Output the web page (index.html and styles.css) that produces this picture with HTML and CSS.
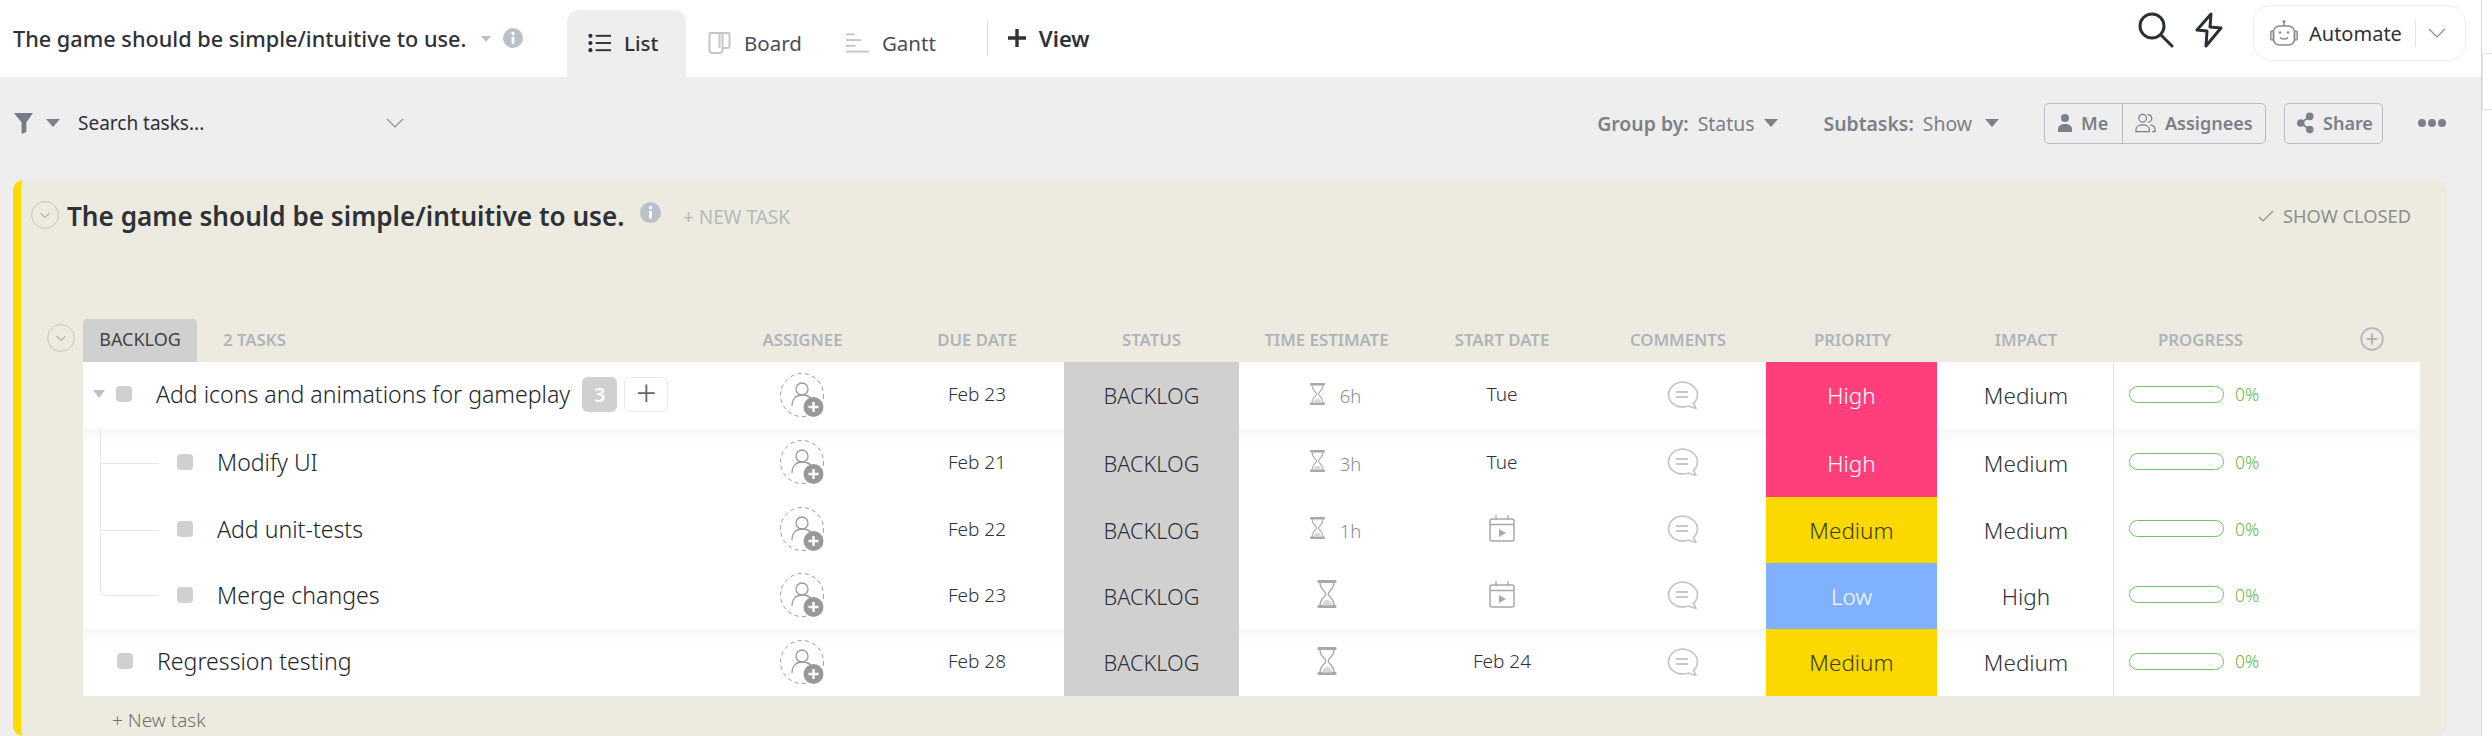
FILE: index.html
```html
<!DOCTYPE html>
<html lang="en">
<head>
  <meta charset="UTF-8" />
  <title>The game should be simple/intuitive to use.</title>
  <link rel="stylesheet" href="styles.css">
</head>
<body>
  <svg class="sprites" width="0" height="0">
    <symbol id="i-info" viewBox="0 0 20 20"><circle cx="10" cy="10" r="10" fill="#b9c0c9"/><rect x="8.6" y="8.5" width="2.8" height="7.5" rx="1" fill="#fff"/><circle cx="10" cy="5.5" r="1.7" fill="#fff"/></symbol>
    <symbol id="i-chev" viewBox="0 0 18 10"><path d="M1 1l8 8 8-8" fill="none" stroke="#8b8f96" stroke-width="1.2"/></symbol>
    <symbol id="i-fold" viewBox="0 0 28 28"><circle cx="14" cy="14" r="13.4" fill="none" stroke="#c6c5ba" stroke-width="1"/><path d="M9.5 12l4.5 4.5 4.5-4.5" fill="none" stroke="#b5b5ad" stroke-width="1.2"/></symbol>
    <symbol id="i-user" viewBox="0 0 46 46">
      <circle cx="22" cy="22" r="21.5" fill="none" stroke="#999" stroke-width="1" stroke-dasharray="4 3.4"/>
      <circle cx="22" cy="16" r="6" fill="none" stroke="#999" stroke-width="1.3"/>
      <path d="M12 33c0-7 4-11 10-11s9 2 10 6" fill="none" stroke="#999" stroke-width="1.3"/>
      <circle cx="33.5" cy="34" r="10" fill="#999"/>
      <path d="M33.5 29v10M28.5 34h10" stroke="#fff" stroke-width="2.4"/>
    </symbol>
    <symbol id="i-glass" viewBox="0 0 15 22">
      <rect x="0" y="0" width="15" height="2.4" rx="1" fill="#a8a8a8"/><rect x="0" y="19.6" width="15" height="2.4" rx="1" fill="#a8a8a8"/>
      <path d="M2 2c0 6 4.5 6.5 4.5 9S2 14 2 20M13 2c0 6-4.5 6.5-4.5 9S13 14 13 20" fill="none" stroke="#a8a8a8" stroke-width="1.1"/>
      <path d="M3.5 20c.5-3 2.5-4 4-4.5 1.5.5 3.5 1.5 4 4.5z" fill="#d6d6d6"/>
    </symbol>
    <symbol id="i-cal" viewBox="0 0 26 27">
      <rect x="1" y="4" width="24" height="22" rx="2" fill="none" stroke="#a8a8a8" stroke-width="1.5"/>
      <path d="M1 9.5h24M7 0v5M19 0v5" stroke="#a8a8a8" stroke-width="1.3"/>
      <path d="M10 14l7 4-7 4z" fill="#a8a8a8"/>
    </symbol>
    <symbol id="i-comment" viewBox="0 0 32 28">
      <path d="M15.5 1.2C8 1.2 1.5 6.8 1.5 13.8S8 26 15.5 26c2.5 0 4.5-.5 6-1l7.5 2.5-2.5-5c2.5-2.3 4-5.3 4-8.7C30.5 6.8 23 1.2 15.5 1.2z" fill="none" stroke="#c4c8cd" stroke-width="1.8" stroke-linejoin="round"/>
      <path d="M9 11h12M9 16h12" stroke="#c4c8cd" stroke-width="1.8"/>
    </symbol>
  </svg>

  <div class="page">
    <div class="main">
      <header class="topbar">
        <div class="page-title">The game should be simple/intuitive to use.</div>
        <span class="caret caret-title"></span>
        <svg class="info-top"><use href="#i-info"/></svg>

        <nav class="tabs">
          <a class="tab tab-active">
            <svg class="tab-icon" viewBox="0 0 24 20"><g fill="#2e3138"><circle cx="2.5" cy="2.5" r="2.2"/><circle cx="2.5" cy="10" r="2.2"/><circle cx="2.5" cy="17.5" r="2.2"/><rect x="8" y="1.5" width="16" height="2"/><rect x="8" y="9" width="16" height="2"/><rect x="8" y="16.5" width="16" height="2"/></g></svg>
            List
          </a>
          <a class="tab">
            <svg class="tab-icon" viewBox="0 0 22 22"><path d="M2 1h18a1 1 0 0 1 1 1v12a2 2 0 0 1-2 2h-5V2M14 16v2a3 3 0 0 1-3 3H4a3 3 0 0 1-3-3V2a1 1 0 0 1 1-1h9v15" fill="none" stroke="#c3c6cb" stroke-width="2"/></svg>
            Board
          </a>
          <a class="tab">
            <svg class="tab-icon" viewBox="0 0 24 20"><g fill="#c3c6cb"><rect x="0" y="0" width="9" height="2"/><rect x="0" y="6" width="16" height="2"/><rect x="0" y="12" width="10" height="2"/><rect x="0" y="18" width="24" height="2"/></g></svg>
            Gantt
          </a>
        </nav>
        <span class="tab-sep"></span>
        <a class="add-view">
          <svg viewBox="0 0 18 18" width="18" height="18"><path d="M9 0v18M0 9h18" stroke="#2e3138" stroke-width="3.4"/></svg>
          View
        </a>

        <div class="top-right">
          <svg class="top-search" viewBox="0 0 36 36"><circle cx="14" cy="14" r="12" fill="none" stroke="#2b2f36" stroke-width="3"/><path d="M23 23l11 11" stroke="#2b2f36" stroke-width="3" stroke-linecap="round"/></svg>
          <svg class="top-bolt" viewBox="0 0 28 36"><path d="M16 2L2 18l10 1-1 15L26 16l-11-1z" fill="none" stroke="#2b2f36" stroke-width="3" stroke-linejoin="round"/></svg>
          <div class="automate">
            <svg class="robot" viewBox="0 0 28 26"><g fill="none" stroke="#8a8a8a" stroke-width="1.5"><rect x="3.5" y="6" width="21" height="19" rx="6"/><rect x=".8" y="11" width="2.7" height="9" rx="1.3"/><rect x="24.5" y="11" width="2.7" height="9" rx="1.3"/><path d="M14 6V2M10 17.5c1.5 2 6.5 2 8 0"/></g><circle cx="14" cy="1.5" r="1.5" fill="#8a8a8a"/><circle cx="10" cy="12.5" r="1.3" fill="#8a8a8a"/><circle cx="18" cy="12.5" r="1.3" fill="#8a8a8a"/></svg>
            <span class="automate-text">Automate</span>
            <span class="automate-sep"></span>
            <svg class="chev"><use href="#i-chev"/></svg>
          </div>
        </div>
      </header>

      <div class="toolbar">
        <svg class="filter" viewBox="0 0 20 22"><path d="M0 0h20l-7 10v10l-5 2V10z" fill="#777b85"/></svg>
        <span class="caret caret-filter"></span>
        <span class="search">Search tasks...</span>
        <svg class="chev chev-search"><use href="#i-chev"/></svg>

        <div class="tools">
          <span class="opt"><b>Group by:</b> Status</span><span class="caret caret-opt"></span>
          <span class="opt opt-sub"><b>Subtasks:</b> Show</span><span class="caret caret-opt caret-show"></span>
          <div class="btn-group">
            <a class="btn btn-me">
              <svg viewBox="0 0 14 18" width="14" height="18"><circle cx="7" cy="4" r="4" fill="#7b8089"/><path d="M0 18v-3c0-3 3-5 7-5s7 2 7 5v3z" fill="#7b8089"/></svg>
              Me
            </a>
            <a class="btn btn-assign">
              <svg viewBox="0 0 22 20" width="21" height="20"><g fill="none" stroke="#7b8089" stroke-width="1.3"><circle cx="8" cy="5" r="4"/><path d="M1 19v-2c0-3 3-5 7-5s7 2 7 5v2zM13 1.2c3 0 4.5 2 4.5 4s-1.5 4-4 4M16 12c3 .5 5 2.5 5 5v2h-3"/></g></svg>
              Assignees
            </a>
          </div>
          <a class="btn btn-share">
            <svg viewBox="0 0 18 22" width="17" height="22"><g fill="#7b8089"><circle cx="13.5" cy="4" r="4"/><circle cx="4" cy="11" r="4"/><circle cx="13.5" cy="18" r="4"/></g><path d="M13.5 4L4 11l9.5 7" fill="none" stroke="#7b8089" stroke-width="1.8"/></svg>
            Share
          </a>
          <span class="dots"><i></i><i></i><i></i></span>
        </div>
      </div>

      <section class="card">
        <div class="card-head">
          <svg class="fold"><use href="#i-fold"/></svg>
          <h2 class="card-title">The game should be simple/intuitive to use.</h2>
          <svg class="info-card"><use href="#i-info"/></svg>
          <span class="new-task-top">+ NEW TASK</span>
          <span class="show-closed">
            <svg viewBox="0 0 16 12" width="16" height="12"><path d="M1 7l4 4L15 1" fill="none" stroke="#8d8f8e" stroke-width="1.2"/></svg>
            SHOW CLOSED
          </span>
        </div>

        <div class="col-head">
          <div class="col-name">
            <svg class="fold fold-small"><use href="#i-fold"/></svg>
            <span class="status-tab">BACKLOG</span>
            <span class="task-count">2 TASKS</span>
          </div>
          <div>ASSIGNEE</div>
          <div>DUE DATE</div>
          <div>STATUS</div>
          <div>TIME ESTIMATE</div>
          <div>START DATE</div>
          <div>COMMENTS</div>
          <div>PRIORITY</div>
          <div>IMPACT</div>
          <div>PROGRESS</div>
          <div class="col-add"><svg viewBox="0 0 24 24" width="24" height="24"><circle cx="12" cy="12" r="10.8" fill="none" stroke="#b3b8bf" stroke-width="1.8"/><path d="M12 6.5v11M6.5 12h11" stroke="#a4a9b0" stroke-width="1.6"/></svg></div>
        </div>

        <div class="rows">
          <div class="row row-1">
            <div class="cell-name">
              <span class="caret caret-row"></span><span class="check"></span>
              <span class="task-name">Add icons and animations for gameplay</span>
              <span class="sub-count">3</span><span class="sub-add">+</span>
            </div>
            <div class="cell"><svg class="assignee"><use href="#i-user"/></svg></div>
            <div class="cell date">Feb 23</div>
            <div class="cell status">BACKLOG</div>
            <div class="cell time"><svg class="glass"><use href="#i-glass"/></svg><span>6h</span></div>
            <div class="cell date">Tue</div>
            <div class="cell"><svg class="comment"><use href="#i-comment"/></svg></div>
            <div class="cell prio high">High</div>
            <div class="cell impact">Medium</div>
            <div class="cell progress"><span class="bar"></span><span class="pct">0%</span></div>
          </div>

          <div class="row row-2 row-sub">
            <div class="cell-name"><span class="branch"></span><span class="check"></span><span class="task-name">Modify UI</span></div>
            <div class="cell"><svg class="assignee"><use href="#i-user"/></svg></div>
            <div class="cell date">Feb 21</div>
            <div class="cell status">BACKLOG</div>
            <div class="cell time"><svg class="glass"><use href="#i-glass"/></svg><span>3h</span></div>
            <div class="cell date">Tue</div>
            <div class="cell"><svg class="comment"><use href="#i-comment"/></svg></div>
            <div class="cell prio high">High</div>
            <div class="cell impact">Medium</div>
            <div class="cell progress"><span class="bar"></span><span class="pct">0%</span></div>
          </div>

          <div class="row row-3 row-sub">
            <div class="cell-name"><span class="branch"></span><span class="check"></span><span class="task-name">Add unit-tests</span></div>
            <div class="cell"><svg class="assignee"><use href="#i-user"/></svg></div>
            <div class="cell date">Feb 22</div>
            <div class="cell status">BACKLOG</div>
            <div class="cell time"><svg class="glass"><use href="#i-glass"/></svg><span>1h</span></div>
            <div class="cell"><svg class="cal"><use href="#i-cal"/></svg></div>
            <div class="cell"><svg class="comment"><use href="#i-comment"/></svg></div>
            <div class="cell prio medium">Medium</div>
            <div class="cell impact">Medium</div>
            <div class="cell progress"><span class="bar"></span><span class="pct">0%</span></div>
          </div>

          <div class="row row-4 row-sub">
            <div class="cell-name"><span class="branch branch-last"></span><span class="check"></span><span class="task-name">Merge changes</span></div>
            <div class="cell"><svg class="assignee"><use href="#i-user"/></svg></div>
            <div class="cell date">Feb 23</div>
            <div class="cell status">BACKLOG</div>
            <div class="cell"><svg class="glass glass-big"><use href="#i-glass"/></svg></div>
            <div class="cell"><svg class="cal"><use href="#i-cal"/></svg></div>
            <div class="cell"><svg class="comment"><use href="#i-comment"/></svg></div>
            <div class="cell prio low">Low</div>
            <div class="cell impact">High</div>
            <div class="cell progress"><span class="bar"></span><span class="pct">0%</span></div>
          </div>

          <div class="row row-5">
            <div class="cell-name cell-name-plain"><span class="check"></span><span class="task-name">Regression testing</span></div>
            <div class="cell"><svg class="assignee"><use href="#i-user"/></svg></div>
            <div class="cell date">Feb 28</div>
            <div class="cell status">BACKLOG</div>
            <div class="cell"><svg class="glass glass-big"><use href="#i-glass"/></svg></div>
            <div class="cell date">Feb 24</div>
            <div class="cell"><svg class="comment"><use href="#i-comment"/></svg></div>
            <div class="cell prio medium">Medium</div>
            <div class="cell impact">Medium</div>
            <div class="cell progress"><span class="bar"></span><span class="pct">0%</span></div>
          </div>
        </div>

        <div class="new-task">+ New task</div>
      </section>
    </div>

    <aside class="side-strip"><span class="side-box"></span></aside>
  </div>
</body>
</html>
```

FILE: styles.css
```css
* {
  box-sizing: border-box;
}

html,
body {
  margin: 0;
  height: 736px;
  overflow: hidden;
}

body {
  font-family: "Noto Sans", sans-serif;
  background: #eee;
  color: #2e3138;
}

.sprites {
  position: absolute;
}

.page {
  display: flex;
  height: 736px;
}

.main {
  width: 2481px;
  display: flex;
  flex-direction: column;
}

.side-strip {
  width: 11px;
  background: #fff;
  border-left: 1px solid #d8d8d8;
  padding-top: 53px;
}

.side-box {
  display: block;
  height: 57px;
  border: 1px solid #e2e2e2;
  border-right: none;
}

.caret {
  display: inline-block;
  width: 0;
  height: 0;
  border-left: 7px solid transparent;
  border-right: 7px solid transparent;
  border-top: 8px solid #7b8089;
}

/* top bar */
.topbar {
  height: 77px;
  background: #fff;
  display: flex;
  align-items: center;
  padding-left: 13px;
}

.page-title {
  font-size: 21.7px;
  font-weight: 500;
  width: 455px;
  white-space: nowrap;
  color: #2e3138;
}

.caret-title {
  margin-left: 13px;
  border-left-width: 5px;
  border-right-width: 5px;
  border-top: 6px solid #b9c0c9;
}

.info-top {
  width: 20px;
  height: 20px;
  margin-left: 12px;
  margin-top: -2px;
}

.tabs {
  display: flex;
  align-self: flex-end;
  height: 67px;
  margin-left: 44px;
}

.tab {
  display: flex;
  align-items: center;
  font-size: 20.5px;
  color: #4a4d55;
  padding: 0 22px 2px;
  gap: 13px;
}

.tab-active {
  width: 119px;
  padding-left: 21px;
  padding-right: 0;
  background: #eee;
  border-radius: 12px 12px 0 0;
  font-weight: 500;
  color: #2e3138;
}

.tab-icon {
  width: 23px;
  height: 22px;
  flex: none;
}

.tab-sep {
  width: 1px;
  height: 36px;
  background: #dedede;
  margin-left: 29px;
  margin-top: -2px;
}

.add-view {
  display: flex;
  align-items: center;
  gap: 13px;
  font-size: 22px;
  font-weight: 600;
  margin-left: 20px;
  margin-top: -2px;
}

.top-right {
  margin-left: auto;
  display: flex;
  align-items: center;
  padding-right: 15px;
  align-self: flex-start;
  padding-top: 5px;
}

.top-search {
  width: 36px;
  height: 36px;
  margin-top: -6px;
}

.top-bolt {
  width: 28px;
  height: 36px;
  margin-left: 21px;
  margin-top: -6px;
}

.automate {
  display: flex;
  align-items: center;
  width: 213px;
  height: 56px;
  margin-left: 30px;
  padding-left: 16px;
  border: 1px solid #ededed;
  border-radius: 18px;
}

.robot {
  width: 28px;
  height: 26px;
}

.automate-text {
  font-size: 20px;
  margin-left: 11px;
  width: 106px;
  white-space: nowrap;
}

.automate-sep {
  width: 1px;
  height: 27px;
  background: #e2e2e2;
}

.chev {
  width: 18px;
  height: 10px;
  margin-left: 12px;
}

/* toolbar */
.toolbar {
  height: 103px;
  display: flex;
  align-items: center;
  padding-left: 14px;
  padding-bottom: 11px;
}

.filter {
  width: 19px;
  height: 21px;
}

.caret-filter {
  margin-left: 13px;
}

.search {
  font-size: 19px;
  margin-left: 18px;
  width: 308px;
  white-space: nowrap;
}

.chev-search {
  margin-left: 0;
}

.tools {
  margin-left: auto;
  display: flex;
  align-items: center;
  padding-right: 35px;
  color: #7b8089;
  font-size: 19.4px;
}

.opt b {
  font-weight: 600;
  margin-right: 4px;
}

.opt-sub {
  margin-left: 45px;
}

.caret-opt {
  margin-left: 10px;
}

.caret-show {
  margin-left: 13px;
}

.btn-group {
  display: flex;
  margin-left: 45px;
  border: 1px solid #b9bcc2;
  border-radius: 5px;
  height: 41px;
}

.btn {
  display: flex;
  align-items: center;
  font-size: 18px;
  font-weight: 600;
  color: #7b8089;
  gap: 9px;
}

.btn-me {
  width: 78px;
  padding-left: 13px;
  border-right: 1px solid #b9bcc2;
}

.btn-assign {
  padding-left: 12px;
  width: 142px;
}

.btn-share {
  margin-left: 18px;
  width: 99px;
  height: 41px;
  padding-left: 12px;
  border: 1px solid #b9bcc2;
  border-radius: 5px;
}

.dots {
  display: flex;
  gap: 2px;
  margin-left: 35px;
}

.dots i {
  width: 8px;
  height: 8px;
  border-radius: 50%;
  background: #7b8089;
}

/* card */
.card {
  width: 2434px;
  height: 556px;
  margin-left: 13px;
  background: #edebdf;
  border-left: 8px solid #fddb00;
  border-radius: 10px;
  padding-right: 27px;
}

.card-head {
  height: 139px;
  display: flex;
  align-items: flex-start;
  padding-left: 10px;
  padding-top: 21px;
}

.fold {
  width: 28px;
  height: 28px;
  flex: none;
}

.card-title {
  margin: -3px 0 0 8px;
  font-size: 26.15px;
  font-weight: 600;
  line-height: 36px;
  white-space: nowrap;
  width: 556px;
  color: #2e3138;
}

.info-card {
  width: 21px;
  height: 21px;
  margin-left: 17px;
  margin-top: 1px;
}

.new-task-top {
  font-size: 19px;
  color: #b5b9bd;
  margin-left: 22px;
  margin-top: 3px;
}

.show-closed {
  margin-left: auto;
  font-size: 18.3px;
  color: #8d8f8e;
  margin-top: 2px;
  margin-right: 9px;
  display: flex;
  align-items: center;
  gap: 9px;
}

.col-head,
.row {
  display: grid;
  grid-template-columns: 632px 175px 174px 175px 175px 176px 176px 173px 174px 175px 132px;
}

.col-head {
  height: 43px;
  margin-left: 62px;
  align-items: center;
  text-align: center;
  font-size: 16.8px;
  font-weight: 600;
  color: #afb4ba;
}

.col-head > div {
  margin-top: -3px;
}

.col-head > .col-name {
  margin-top: 0;
}

.col-name {
  display: flex;
  align-items: center;
  align-self: stretch;
  text-align: left;
  position: relative;
}

.fold-small {
  width: 28px;
  height: 28px;
  position: absolute;
  left: -36px;
  top: 5px;
}

.status-tab {
  display: flex;
  align-items: center;
  justify-content: center;
  width: 114px;
  height: 43px;
  padding-bottom: 3px;
  background: #d0d0d0;
  border-radius: 4px 4px 0 0;
  font-size: 18px;
  font-weight: 400;
  color: #444;
}

.task-count {
  margin-left: 26px;
  margin-top: -3px;
}

.col-add {
  padding-left: 36px;
  line-height: 0;
}

.rows {
  background: #fff;
  margin-left: 62px;
}

.row {
  position: relative;
}

.row-1 { height: 67px; }
.row-2 { height: 68px; }
.row-3 { height: 66px; }
.row-4 { height: 66px; }
.row-5 { height: 67px; }

.row-2,
.row-5 {
  background: linear-gradient(#f7f7f7, #fff 14px);
}

.cell {
  display: flex;
  align-items: center;
  justify-content: center;
}

.cell-name {
  display: flex;
  align-items: center;
  padding-left: 10px;
  padding-bottom: 3px;
  position: relative;
}

.cell-name-plain {
  padding-left: 34px;
}

.caret-row {
  border-left-width: 6px;
  border-right-width: 6px;
  border-top: 8px solid #b9c0c9;
  margin-right: 11px;
}

.row-sub .cell-name {
  padding-left: 94px;
}

.check {
  width: 16px;
  height: 16px;
  border-radius: 4px;
  background: #d0d0d0;
  flex: none;
}

.task-name {
  font-size: 23.1px;
  font-weight: 300;
  margin-left: 24px;
  white-space: nowrap;
  color: #22242a;
}

.sub-count {
  width: 35px;
  height: 35px;
  margin-left: 12px;
  background: #d0d0d0;
  border-radius: 6px;
  color: #fff;
  font-size: 20px;
  font-weight: 600;
  text-align: center;
  line-height: 35px;
}

.sub-add {
  width: 44px;
  height: 35px;
  margin-left: 7px;
  border: 1px solid #e8e8e8;
  border-radius: 6px;
  font-size: 36px;
  font-weight: 300;
  text-align: center;
  line-height: 30px;
  color: #666;
}

/* tree lines under the parent task */
.branch {
  position: absolute;
  left: 17px;
  top: 0;
  width: 58px;
  height: 50%;
  border-left: 1px solid #e6e6e6;
  border-bottom: 1px solid #e6e6e6;
}

.row-3 .branch,
.row-2 .branch {
  height: 100%;
  border-bottom: none;
}

.row-2 .branch::after,
.row-3 .branch::after {
  content: "";
  position: absolute;
  left: 0;
  top: 50%;
  width: 58px;
  border-top: 1px solid #e6e6e6;
}

.branch-last {
  border-bottom-left-radius: 6px;
}

.assignee {
  width: 46px;
  height: 46px;
}

.date {
  font-size: 19px;
  font-weight: 300;
  color: #2e3138;
  padding-bottom: 3px;
}

.status {
  background: #d0d0d0;
  font-size: 21.7px;
  font-weight: 300;
  color: #2e3138;
}

.time {
  color: #8a8d92;
  font-size: 18.5px;
  font-weight: 300;
  gap: 15px;
  padding-left: 18px;
}

.glass {
  width: 15px;
  height: 22px;
  margin-top: -4px;
}

.glass-big {
  width: 20px;
  height: 28px;
}

.cal {
  width: 26px;
  height: 27px;
  margin-top: -4px;
}

.comment {
  width: 32px;
  height: 28px;
  margin-top: -2px;
  margin-left: 10px;
}

.prio {
  font-size: 22.5px;
  font-weight: 300;
  margin-right: 2px;
}

.high {
  background: #ff3f7c;
  color: #fff;
}

.medium {
  background: #fbd900;
  color: #3a3916;
}

.low {
  background: #80b1ff;
  color: #fff;
}

.impact {
  font-size: 22.5px;
  font-weight: 300;
  color: #2e3138;
}

.progress {
  justify-content: flex-start;
  padding-left: 15px;
  border-left: 1px solid #e2e2e2;
  gap: 11px;
}

.bar {
  width: 95px;
  height: 17px;
  border: 1px solid #75c05f;
  border-radius: 9px;
  margin-top: -3px;
}

.pct {
  font-size: 17.5px;
  font-weight: 300;
  color: #5fb944;
  margin-top: -3px;
}

.new-task {
  margin-left: 91px;
  padding-top: 11px;
  font-size: 19px;
  font-weight: 300;
  color: #6f6f69;
}
```
